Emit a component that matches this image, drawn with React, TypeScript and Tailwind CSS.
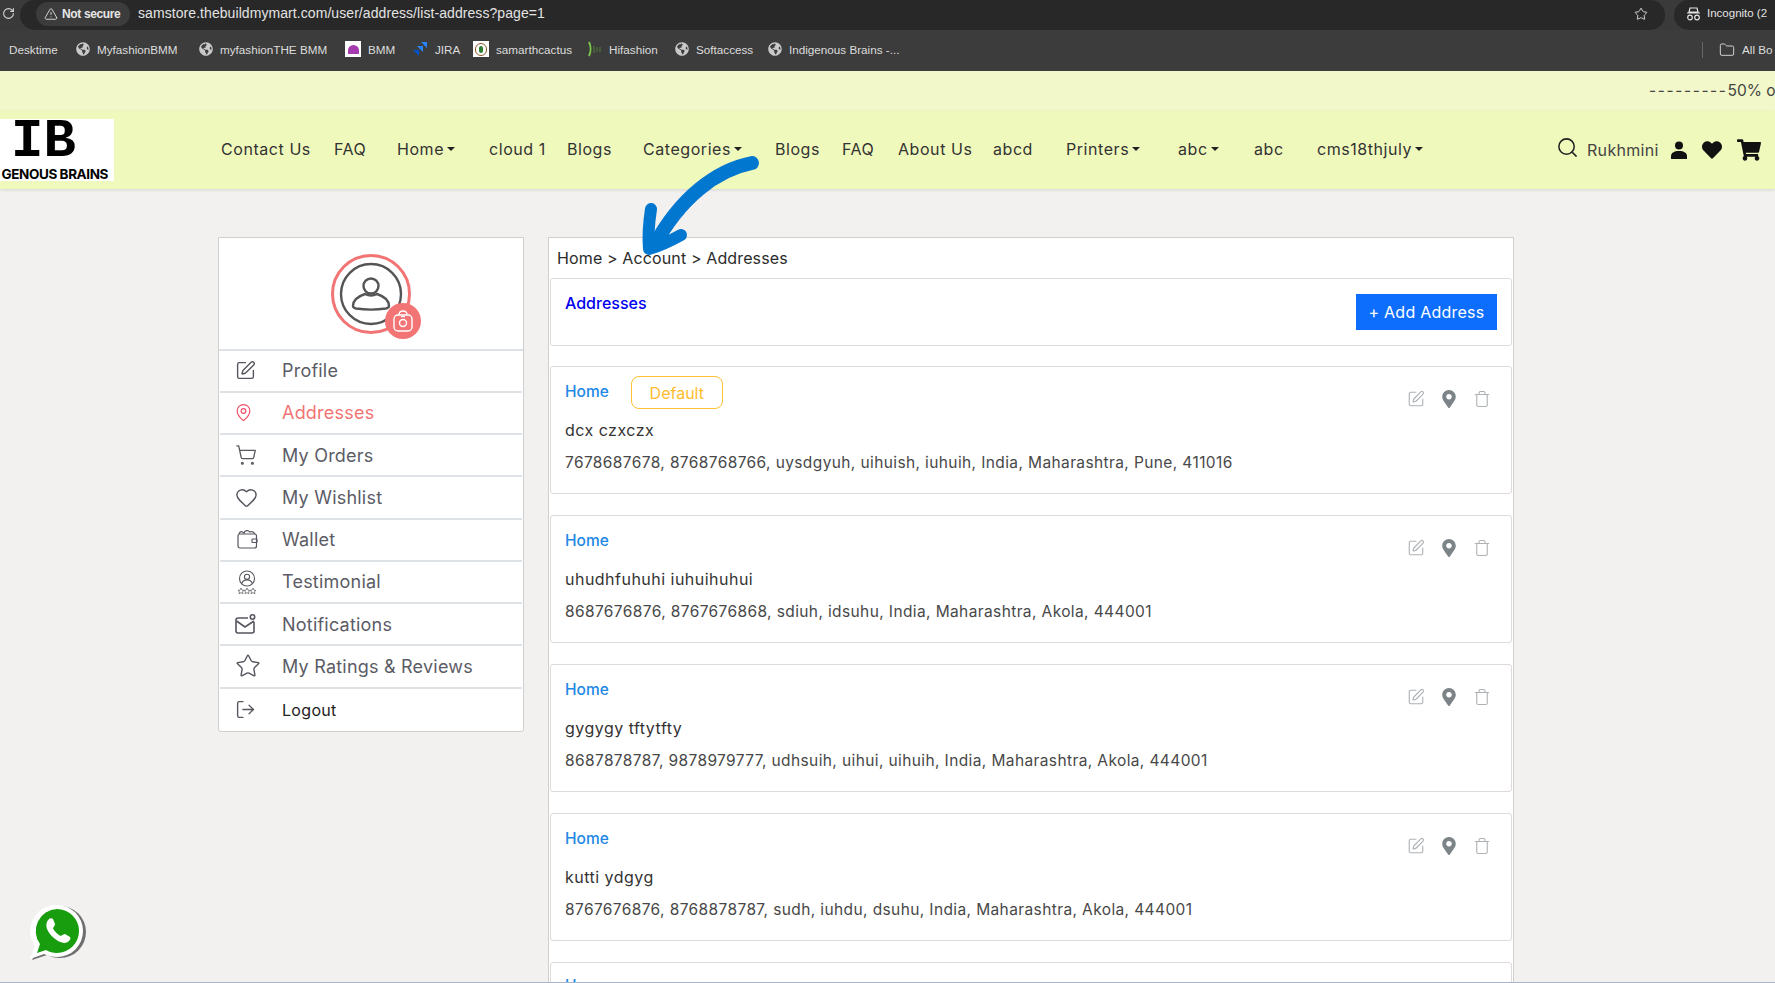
import { Search, SquarePen, MapPin, ShoppingCart, Heart, Star, LogOut, Trash, RotateCw, TriangleAlert, Folder } from "lucide-react";
import { FaGlobeAmericas, FaHeart, FaShoppingCart, FaMapMarkerAlt } from "react-icons/fa";

const bookmarks = [
  { label: "Desktime", cls: "w-[76px] pl-[9px]", icon: null },
  { label: "MyfashionBMM", cls: "w-[123px]", icon: "globe" },
  { label: "myfashionTHE BMM", cls: "w-[146px]", icon: "globe" },
  { label: "BMM", cls: "w-[67px]", icon: "bmm" },
  { label: "JIRA", cls: "w-[61px]", icon: "jira" },
  { label: "samarthcactus", cls: "w-[113px]", icon: "cactus" },
  { label: "Hifashion", cls: "w-[89px]", icon: "hi" },
  { label: "Softaccess", cls: "w-[93px]", icon: "globe" },
  { label: "Indigenous Brains -...", cls: "w-[150px]", icon: "globe" },
];

const navItems = [
  { label: "Contact Us", cls: "w-[113px]" },
  { label: "FAQ", cls: "w-[63px]" },
  { label: "Home", cls: "w-[92px]", caret: true },
  { label: "cloud 1", cls: "w-[78px]" },
  { label: "Blogs", cls: "w-[76px]" },
  { label: "Categories", cls: "w-[132px]", caret: true },
  { label: "Blogs", cls: "w-[67px]" },
  { label: "FAQ", cls: "w-[56px]" },
  { label: "About Us", cls: "w-[95px]" },
  { label: "abcd", cls: "w-[73px]" },
  { label: "Printers", cls: "w-[112px]", caret: true },
  { label: "abc", cls: "w-[76px]", caret: true },
  { label: "abc", cls: "w-[63px]" },
  { label: "cms18thjuly", cls: "w-[110px]", caret: true },
];

const addresses = [
  { name: "dcx czxczx", line: "7678687678, 8768768766, uysdgyuh, uihuish, iuhuih, India, Maharashtra, Pune, 411016", isDefault: true },
  { name: "uhudhfuhuhi iuhuihuhui", line: "8687676876, 8767676868, sdiuh, idsuhu, India, Maharashtra, Akola, 444001" },
  { name: "gygygy tftytfty", line: "8687878787, 9878979777, udhsuih, uihui, uihuih, India, Maharashtra, Akola, 444001" },
  { name: "kutti ydgyg", line: "8767676876, 8768878787, sudh, iuhdu, dsuhu, India, Maharashtra, Akola, 444001" },
];

function BookmarkIcon({ kind }: { kind: string | null }) {
  if (kind === "globe") return <FaGlobeAmericas className="w-[14px] h-[14px] text-[#c9c9c9]" />;
  if (kind === "bmm")
    return (
      <span className="w-[16px] h-[16px] bg-white flex items-center justify-center">
        <span className="w-[11px] h-[9px] rounded-t-full bg-[#a63bb0]" />
      </span>
    );
  if (kind === "jira")
    return (
      <svg width="16" height="16" viewBox="0 0 16 16">
        <path d="M9 1h6v6z" fill="#2684ff" />
        <path d="M5 5h6v6z" fill="#2684ff" />
        <path d="M1 9h6v6z" fill="#0052cc" />
      </svg>
    );
  if (kind === "cactus")
    return (
      <span className="w-[16px] h-[16px] bg-white flex items-center justify-center">
        <span className="w-[12px] h-[13px] rounded-full border border-[#8a5a2b] flex items-center justify-center">
          <span className="w-[4px] h-[7px] rounded-full bg-[#2e7d32]" />
        </span>
      </span>
    );
  if (kind === "hi")
    return (
      <svg width="16" height="16" viewBox="0 0 16 16">
        <path d="M3 1c2 4 2 10 0 14" stroke="#7cc34a" strokeWidth="2" fill="none" />
        <path d="M8 5v7M11 6v5M14 6v5" stroke="#4d6b3a" strokeWidth="1.4" />
      </svg>
    );
  return null;
}

function WalletIcon() {
  return (
    <svg width="21" height="19" viewBox="0 0 21 19" fill="none" stroke="#55565f" strokeWidth="1.2" className="ml-[2px]">
      <rect x="1" y="4" width="18.5" height="14" rx="2" />
      <path d="M2 4c1-3 3-3 5-1 1-3 4-3 6-1 2-1 4 0 5 2" />
      <rect x="15" y="9" width="5" height="3.5" rx="0.8" />
    </svg>
  );
}

function TestimonialIcon() {
  return (
    <svg width="20" height="24" viewBox="0 0 20 24" fill="none" stroke="#55565f" strokeWidth="1.1" className="ml-[2px]">
      <circle cx="10" cy="8.5" r="7.5" />
      <circle cx="10" cy="6.8" r="2.6" />
      <path d="M4.8 13.5c1-3 3-3.6 5.200-3.6s4.200.6 5.200 3.6" />
      <path d="M4 18l1 2.200 2 .2-1.500 1.300.5 2-2-1.100-2 1.100.5-2L1 20.400l2-.2zM10 18l1 2.200 2 .2-1.500 1.300.5 2-2-1.100-2 1.100.5-2L7 20.400l2-.2zM16 18l1 2.200 2 .2-1.500 1.300.5 2-2-1.100-2 1.100.5-2-1.500-1.300 2-.2z" strokeWidth="0.7" />
    </svg>
  );
}

function MailDotIcon() {
  return (
    <svg width="21" height="21" viewBox="0 0 21 21" fill="none" stroke="#55565f" strokeWidth="1.6">
      <path d="M13 4H3a2 2 0 0 0-2 2v11a2 2 0 0 0 2 2h14a2 2 0 0 0 2-2V8" />
      <path d="M1.500 7l8.500 6 9-6" />
      <circle cx="17.500" cy="3" r="2.200" />
    </svg>
  );
}

function Avatar() {
  return (
    <div className="relative w-[80px] h-[80px] rounded-full border-[3px] border-[#f27474] flex items-center justify-center">
      <svg width="64" height="64" viewBox="0 0 64 64" fill="none" stroke="#555" strokeWidth="2.4">
        <circle cx="32" cy="32" r="30" />
        <circle cx="32" cy="24" r="7.500" />
        <path d="M14 44c0-8 9-11 12-12 4 2 8 2 12 0 3 1 12 4 12 12 0 1-1 2-3 2.500-10 1.500-20 1.500-30 0-2-.5-3-1.500-3-2.500z" />
      </svg>
      <div className="absolute left-[51px] top-[46px] w-[36px] h-[36px] rounded-full bg-[#f27474] flex items-center justify-center">
        <svg width="20" height="22" viewBox="0 0 20 22" fill="none" stroke="#fff" strokeWidth="1.4">
          <rect x="1" y="5" width="18" height="16" rx="4" />
          <path d="M6 5c0-2 1-4 4-4s4 2 4 4" />
          <circle cx="10" cy="13" r="3.500" />
          <path d="M8 6.500h4" />
        </svg>
      </div>
    </div>
  );
}

function SideRow({ icon, label, cls }: { icon: React.ReactNode; label: string; cls?: string }) {
  return (
    <div className="h-[42.25px] mx-px flex items-center border-b-2 border-[#dee2e6] last:border-b-0">
      <div className="w-[62px] pl-[15px] flex items-center shrink-0">{icon}</div>
      <span className={cls ?? "text-[18px] text-[#5b5c66] tracking-[0.012em]"}>{label}</span>
    </div>
  );
}

function AddressCard({ name, line, isDefault }: { name: string; line: string; isDefault?: boolean }) {
  return (
    <div className="relative mx-px mb-[21px] h-[128px] border border-[#e0d9dc] rounded-[3px] px-[14px] pt-[9px]">
      <div className="h-[33px] flex items-start">
        <span className="mt-[4px] text-[15.5px] font-medium text-[#2188e6]">Home</span>
        {isDefault && (
          <span className="ml-[22px] w-[92px] h-[33px] border border-[#ffc033] rounded-lg flex items-center justify-center text-[16px] text-[#ffbd2e]">
            Default
          </span>
        )}
      </div>
      <div className="mt-[9px] text-[16px] leading-[24px] text-[#333] tracking-[0.03em]">{name}</div>
      <div className="mt-[9px] text-[15.5px] leading-[24px] text-[#484848] tracking-[0.025em] whitespace-nowrap">{line}</div>
      <div className="absolute right-[20px] top-[23px] flex items-center gap-[15px]">
        <SquarePen className="w-[18px] h-[18px] text-[#aeb2b5]" strokeWidth={1.5} />
        <FaMapMarkerAlt className="w-[18px] h-[18px] text-[#7d8488]" />
        <Trash className="w-[18px] h-[18px] text-[#aeb2b5]" strokeWidth={1.5} />
      </div>
    </div>
  );
}

export default function App() {
  return (
    <div className="relative w-[1775px] h-[983px] overflow-hidden bg-[#f2f1ef] font-['Inter',sans-serif]">
      {/* browser chrome */}
      <div className="h-[30px] bg-[#3a3a3a] flex items-center font-['Liberation_Sans',sans-serif]">
        <div className="w-[34px] pl-[2px] pb-[3px] shrink-0">
          <RotateCw className="w-[13px] h-[13px] text-[#d5d5d5]" />
        </div>
        <div className="h-[30px] w-[1645px] -ml-[14px] pl-[14px] pr-[17px] pb-[3px] rounded-full bg-[#282828] flex items-center">
          <div className="h-[24px] w-[94px] ml-[2px] rounded-full bg-[#3c3c3c] flex items-center pl-[8px] gap-[4px] text-[12px] font-bold text-[#e6e6e6]">
            <TriangleAlert className="w-[14px] h-[14px] shrink-0" strokeWidth={1.5} />
            <span className="whitespace-nowrap tracking-[-0.03em]">Not secure</span>
          </div>
          <span className="ml-[8px] text-[14px] text-[#e3e3e3] tracking-[0.005em]">samstore.thebuildmymart.com/user/address/list-address?page=1</span>
          <Star className="w-[14px] h-[14px] ml-auto text-[#dedede]" strokeWidth={1.6} />
        </div>
        <div className="h-[30px] ml-[9px] pb-[3px] flex-1 rounded-l-full bg-[#282828] flex items-center pl-[12px] gap-[6px] overflow-hidden">
          <svg width="15" height="14" viewBox="0 0 15 14" fill="none" stroke="#e3e3e3" strokeWidth="1.2" className="shrink-0">
            <path d="M4 1h7l1 4H3zM1 6h13" />
            <circle cx="4" cy="10.500" r="2.300" />
            <circle cx="11" cy="10.500" r="2.300" />
          </svg>
          <span className="text-[11.5px] text-[#e3e3e3] whitespace-nowrap">Incognito (2</span>
        </div>
      </div>
      <div className="h-[41px] pb-[2px] bg-[#3c3c3c] flex items-center font-['Liberation_Sans',sans-serif] text-[11.7px] text-[#dcdcdc] overflow-hidden">
        {bookmarks.map((b, i) => (
          <div key={i} className={`${b.cls} flex items-center gap-[7px] shrink-0 whitespace-nowrap`}>
            <BookmarkIcon kind={b.icon} />
            <span>{b.label}</span>
          </div>
        ))}
        <div className="ml-[784px] w-px h-[16px] bg-[#666] shrink-0" />
        <Folder className="ml-[16px] w-[16px] h-[16px] text-[#dcdcdc] shrink-0" strokeWidth={1.4} />
        <span className="ml-[7px] whitespace-nowrap">All Bo</span>
      </div>

      {/* promo strip */}
      <div className="h-[40px] bg-[#f2f8c9] pl-[1649px] flex items-center whitespace-nowrap text-[15.5px] text-[#444]">
        <span className="tracking-[1.6px]">---------</span>
        <span>50% o</span>
      </div>

      {/* nav */}
      <div className="h-[78px] bg-[#f0f9bc] shadow-[0_1px_3px_rgba(0,0,0,0.12)] flex items-center">
        <div className="w-[114px] h-[62px] bg-white shrink-0 flex flex-col items-start overflow-hidden">
          <div className="h-[46px] pl-[11px] font-['Liberation_Mono',monospace] font-bold text-[54px] leading-[46px] text-black">IB</div>
          <div className="mt-[3px] w-[108px] text-right whitespace-nowrap text-[13.5px] leading-[13px] font-bold text-black tracking-[-0.03em]">
            GENOUS BRAINS
          </div>
        </div>
        <nav className="ml-[107px] -mt-[2px] flex items-center text-[16px] text-[#333] tracking-[0.035em]">
          {navItems.map((n, i) => (
            <div key={i} className={`${n.cls} shrink-0 whitespace-nowrap flex items-center`}>
              <span>{n.label}</span>
              {n.caret && <span className="ml-[3px] border-x-[4px] border-x-transparent border-t-[4px] border-t-[#222]" />}
            </div>
          ))}
        </nav>
        <Search className="ml-[129px] -mt-[6px] w-[23px] h-[23px] text-[#222]" strokeWidth={1.6} />
        <span className="ml-[8px] text-[16px] text-[#444] tracking-[0.02em]">Rukhmini</span>
        <svg width="18" height="18" viewBox="0 0 18 18" className="ml-[11px]" fill="#111">
          <circle cx="9" cy="4.500" r="4" />
          <path d="M1 18v-3c0-3 3-5 8-5s8 2 8 5v3z" />
        </svg>
        <FaHeart className="ml-[14px] w-[20px] h-[20px] text-[#111]" />
        <FaShoppingCart className="ml-[15px] w-[24px] h-[22px] text-[#111]" />
      </div>

      {/* content */}
      <div className="flex items-start pl-[218px] pt-[48px]">
        <aside className="w-[306px] shrink-0 bg-white border border-[#cfcfcf] rounded-b-[3px]">
          <div className="h-[112.5px] pt-[16px] flex justify-center border-b-2 border-[#dee2e6]">
            <Avatar />
          </div>
          <SideRow icon={<SquarePen className="w-[21px] h-[21px] text-[#55565f]" strokeWidth={1.6} />} label="Profile" />
          <SideRow icon={<MapPin className="w-[19px] h-[21px] -ml-[1px] text-[#f0526b]" strokeWidth={1.5} />} label="Addresses" cls="text-[18px] text-[#f27474] tracking-[0.012em]" />
          <SideRow icon={<ShoppingCart className="w-[22px] h-[22px] text-[#55565f]" strokeWidth={1.4} />} label="My Orders" />
          <SideRow icon={<Heart className="w-[23px] h-[23px] text-[#55565f]" strokeWidth={1.5} />} label="My Wishlist" />
          <SideRow icon={<WalletIcon />} label="Wallet" />
          <SideRow icon={<TestimonialIcon />} label="Testimonial" />
          <SideRow icon={<MailDotIcon />} label="Notifications" />
          <SideRow icon={<Star className="w-[26px] h-[26px] text-[#55565f]" strokeWidth={1.3} />} label="My Ratings & Reviews" />
          <SideRow icon={<LogOut className="w-[21px] h-[21px] text-[#55565f]" strokeWidth={1.6} />} label="Logout" cls="text-[16px] text-[#222] tracking-[0.02em]" />
        </aside>

        <main className="ml-[24px] w-[966px] shrink-0 bg-white border border-[#cfcfcf] pb-[40px]">
          <div className="h-[40px] pl-[8px] pb-[1px] flex items-center text-[16px] text-[#2b2b2b] tracking-[0.008em]">Home &gt; Account &gt; Addresses</div>
          <div className="mx-px mb-[20px] h-[68px] border border-[#e0dcdc] rounded-[3px] pl-[14px] pr-[14px] flex justify-between">
            <span className="mt-[12px] text-[16px] font-medium text-[#0000ee]">Addresses</span>
            <button className="mt-[15px] w-[141px] h-[36px] bg-[#0d6efd] text-white text-[16px] tracking-[0.015em]">+ Add Address</button>
          </div>
          {addresses.map((a, i) => (
            <AddressCard key={i} {...a} />
          ))}
          <div className="mx-px h-[128px] border border-[#e0d9dc] rounded-[3px] px-[14px] pt-[10px]">
            <span className="text-[15.5px] font-medium text-[#2188e6]">Home</span>
          </div>
        </main>
      </div>

      {/* annotation arrow */}
      <svg className="absolute left-[640px] top-[150px]" width="125" height="115" viewBox="0 0 125 115" fill="none" stroke="#0277d0" strokeLinecap="round" strokeLinejoin="round">
        <path d="M112 13C76 20 40 48 14 96" strokeWidth="14" />
        <path d="M11 59C9 72 8 88 9 99C20 96 32 90 41 85" strokeWidth="12" />
      </svg>

      {/* whatsapp */}
      <svg className="absolute left-[25px] top-[902px]" width="62" height="60" viewBox="0 0 62 60">
        <path d="M33 3a26 26 0 0 1 0 52c-5 0-9-1-13-3l-15 5 6-12a26 26 0 0 1 22-42z" fill="#6f6f6f" transform="translate(2 1)" />
        <path d="M32 3a26 26 0 0 1 0 52c-5 0-9-1-13-3L5 57l5-13A26 26 0 0 1 32 3z" fill="#fff" />
        <path d="M32 7a22 22 0 0 1 0 44c-4 0-8-1-11-3l-9 3 3-9a22 22 0 0 1 17-35z" fill="#189d0e" />
        <path d="M24 17c1-1 3-1 4 0l2 5c0 1-1 3-2 4 1 3 5 7 8 8 1-1 3-2 4-2l5 3c1 1 0 3-1 4-3 3-7 2-11 0-5-3-9-7-11-12-1-4-1-7 2-10z" fill="#fff" />
      </svg>

      <div className="absolute left-0 bottom-0 w-full h-px bg-[#a9b5c4]" />
    </div>
  );
}
